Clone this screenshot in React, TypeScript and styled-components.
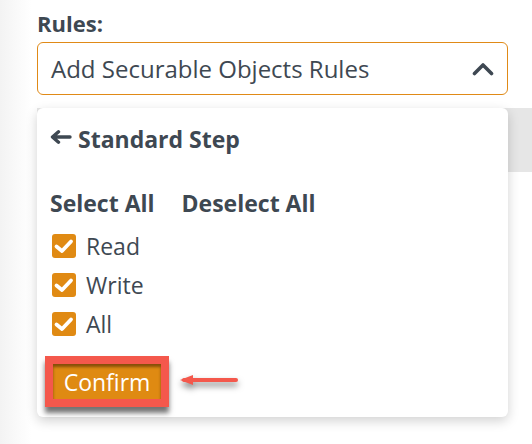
import React from "react";
import styled, { createGlobalStyle } from "styled-components";

const Global = createGlobalStyle`
  html, body { margin: 0; padding: 0; }
  body {
    width: 532px;
    height: 444px;
    overflow: hidden;
    background: linear-gradient(to right, #f3f3f3 0px, #fafafa 18px, #ffffff 32px);
    font-family: "Open Sans", Lato, sans-serif;
    color: #3e4852;
  }
`;

const Page = styled.div`
  position: relative;
  padding: 10px 24px 0 37px;
  display: flex;
  flex-direction: column;
`;

const Label = styled.div`
  font-size: 22px;
  font-weight: 700;
  line-height: 26px;
  height: 26px;
`;

const Select = styled.div`
  margin-top: 6px;
  height: 51px;
  border: 1px solid #e08a17;
  border-radius: 6px;
  background: #fff;
  display: flex;
  align-items: center;
  justify-content: space-between;
  padding: 0 13px 0 13px;
  font-size: 24px;
  color: #3e4852;
`;

const Underlay = styled.div`
  margin-top: 13px;
  margin-right: -24px;
  height: 64px;
  background: #e6e6e6;
`;

const Popup = styled.div`
  position: absolute;
  top: 108px;
  left: 37px;
  width: 471px;
  height: 309px;
  box-sizing: border-box;
  background: #fff;
  border-radius: 6px;
  box-shadow: 0 4px 12px rgba(0, 0, 0, 0.18);
  padding: 17px 13px 0 13px;
  display: flex;
  flex-direction: column;
`;

const Title = styled.div`
  display: flex;
  align-items: center;
  gap: 6px;
  font-size: 23px;
  font-weight: 700;
  line-height: 28px;
`;

const BackIcon = styled.svg`
  margin-top: -4px;
`;

const Actions = styled.div`
  margin-top: 36px;
  display: flex;
  gap: 27px;
  font-size: 23px;
  font-weight: 700;
  line-height: 28px;
`;

const List = styled.div`
  margin-top: 17px;
  display: flex;
  flex-direction: column;
  gap: 15px;
`;

const Row = styled.label`
  display: flex;
  align-items: center;
  gap: 10px;
  font-size: 23px;
  line-height: 24px;
  padding-left: 2px;
`;

const Box = styled.span`
  width: 24px;
  height: 24px;
  border-radius: 3px;
  background: #e08a13;
  display: flex;
`;

const Footer = styled.div`
  margin-top: 20px;
  margin-left: -5px;
  display: flex;
  align-items: center;
  gap: 9px;
`;

const Highlight = styled.div`
  border: 8px solid #f4584c;
  box-shadow: 0 6px 5px rgba(0, 0, 0, 0.55);
  display: flex;
`;

const ConfirmButton = styled.button`
  width: 108px;
  height: 35px;
  border: none;
  padding: 0;
  background: #df8a12;
  box-shadow: inset 0 3px 3px rgba(60, 30, 0, 0.55);
  color: #fff;
  font-family: "Open Sans", Lato, sans-serif;
  font-size: 23px;
  line-height: 24px;
`;

const Check = () => (
  <svg width="24" height="24" viewBox="0 0 24 24">
    <path d="M4.5 12.5 L10 17 L19 7.5" fill="none" stroke="#fff" strokeWidth="3.8" strokeLinecap="round" strokeLinejoin="round" />
  </svg>
);

export default function App() {
  return (
    <>
      <Global />
      <Page>
        <Label>Rules:</Label>
        <Select>
          <span>Add Securable Objects Rules</span>
          <svg width="22" height="14" viewBox="0 0 22 14">
            <path d="M2.5 11.5 L11 3 L19.5 11.5" fill="none" stroke="#3e4852" strokeWidth="3.6" strokeLinecap="round" strokeLinejoin="round" />
          </svg>
        </Select>
        <Underlay />
        <Popup>
          <Title>
            <BackIcon width="22" height="14" viewBox="0 0 22 14">
              <path d="M20 7 H3 M8.5 1.8 L2.5 7 L8.5 12.2" fill="none" stroke="#3e4852" strokeWidth="3.4" strokeLinecap="round" strokeLinejoin="round" />
            </BackIcon>
            <span>Standard Step</span>
          </Title>
          <Actions>
            <span>Select All</span>
            <span>Deselect All</span>
          </Actions>
          <List>
            {["Read", "Write", "All"].map((t) => (
              <Row key={t}>
                <Box><Check /></Box>
                <span>{t}</span>
              </Row>
            ))}
          </List>
          <Footer>
            <Highlight>
              <ConfirmButton>Confirm</ConfirmButton>
            </Highlight>
            <svg width="62" height="20" viewBox="0 0 62 20" style={{ filter: "drop-shadow(0 4px 3px rgba(0,0,0,0.5))" }}>
              <path d="M58 8 H6" stroke="#f4584c" strokeWidth="4" strokeLinecap="round" />
              <path d="M2 8 L15 3 L15 13 Z" fill="#f4584c" />
            </svg>
          </Footer>
        </Popup>
      </Page>
    </>
  );
}
